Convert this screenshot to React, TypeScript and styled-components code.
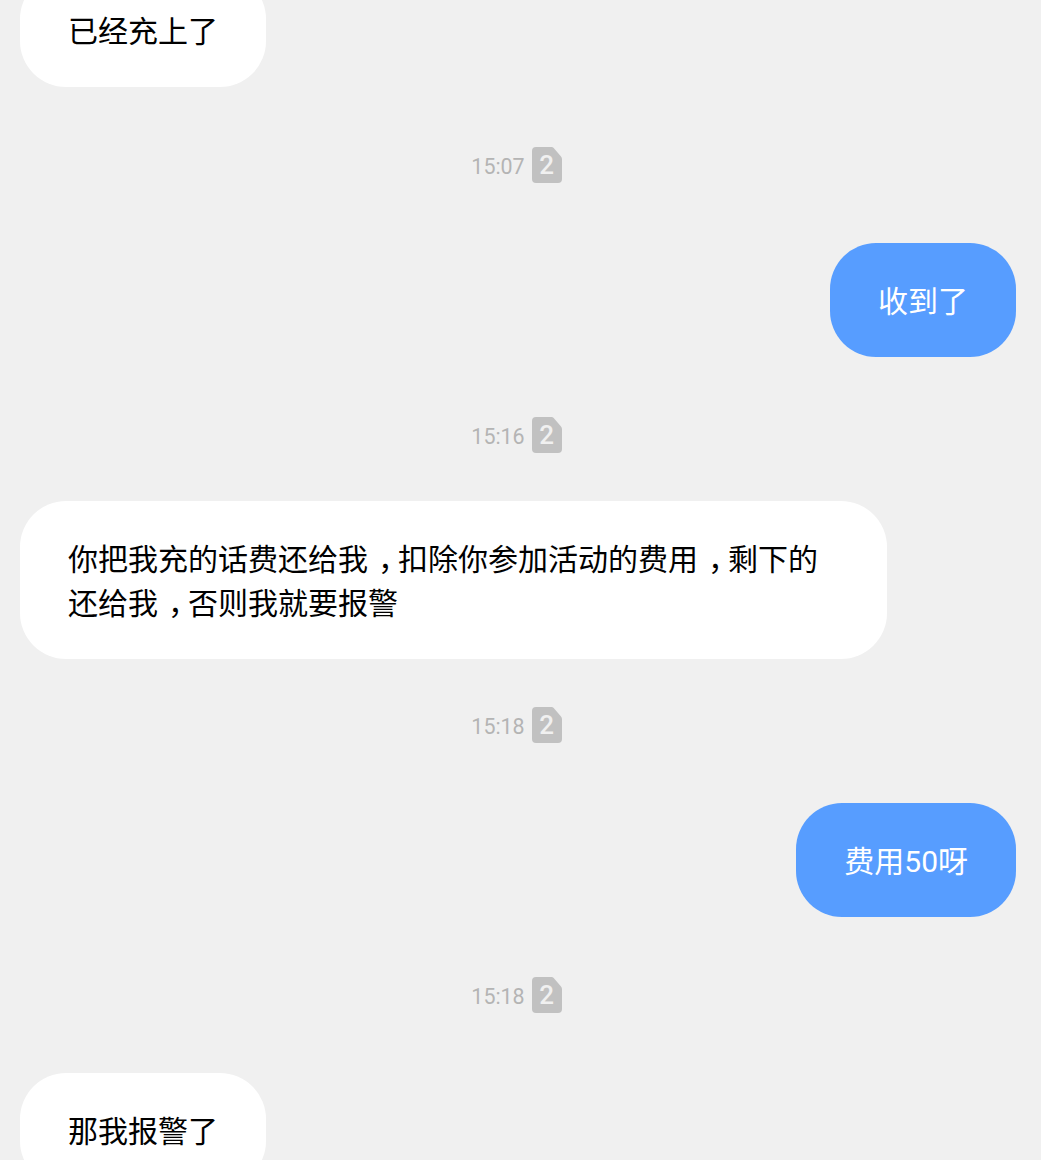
import { Fragment } from 'react';
import styled, { createGlobalStyle } from 'styled-components';

type Message =
  | { kind: 'time'; time: string; above: number; below: number }
  | { kind: 'bubble'; side: 'left' | 'right'; lines: string };

const messages: Message[] = [
  { kind: 'bubble', side: 'left', lines: '已经充上了' },
  { kind: 'time', time: '15:07', above: 60, below: 60 },
  { kind: 'bubble', side: 'right', lines: '收到了' },
  { kind: 'time', time: '15:16', above: 60, below: 48 },
  {
    kind: 'bubble',
    side: 'left',
    lines: '你把我充的话费还给我，扣除你参加活动的费用，剩下的还给我，否则我就要报警',
  },
  { kind: 'time', time: '15:18', above: 48, below: 60 },
  { kind: 'bubble', side: 'right', lines: '费用50呀' },
  { kind: 'time', time: '15:18', above: 60, below: 60 },
  { kind: 'bubble', side: 'left', lines: '那我报警了' },
];

// 逗号单独处理, 参考图里是居中的
function withCommas(text: string) {
  return text.split('，').map((part, i) => (
    <Fragment key={i}>
      {i > 0 && <Comma>，</Comma>}
      {part}
    </Fragment>
  ));
}

export default function App() {
  return (
    <>
      <GlobalStyle />
      <Page>
        <Thread>
          {messages.map((item, index) =>
            item.kind === 'time' ? (
              <TimeRow key={index} $above={item.above} $below={item.below}>
                <TimeText>{item.time}</TimeText>
                <Badge>
                  <BadgeShape viewBox="0 0 30 36">
                    <path d="M4 0H19.5a3 3 0 0 1 2.2 1L29 9.6a4 4 0 0 1 1 2.6V32a4 4 0 0 1-4 4H4a4 4 0 0 1-4-4V4a4 4 0 0 1 4-4Z" />
                  </BadgeShape>
                  <BadgeCount>2</BadgeCount>
                </Badge>
              </TimeRow>
            ) : (
              <Bubble key={index} $side={item.side}>
                {withCommas(item.lines)}
              </Bubble>
            ),
          )}
        </Thread>
      </Page>
    </>
  );
}

const GlobalStyle = createGlobalStyle`
  html, body {
    margin: 0;
    padding: 0;
    background: #f0f0f0;
  }
`;

const Page = styled.div`
  width: 1041px;
  height: 1160px;
  overflow: hidden;
  background: #f0f0f0;
  font-family: Roboto, 'Noto Sans CJK SC', sans-serif;
`;

const Thread = styled.div`
  display: flex;
  flex-direction: column;
  margin-top: -27px;
  padding: 0 25px 0 20px;
`;

const Bubble = styled.div<{ $side: 'left' | 'right' }>`
  box-sizing: border-box;
  width: fit-content;
  max-width: 867px;
  padding: 37px 48px 33px;
  border-radius: 46px;
  font-size: 30px;
  line-height: 44px;
  align-self: ${({ $side }) => ($side === 'left' ? 'flex-start' : 'flex-end')};
  background: ${({ $side }) => ($side === 'left' ? '#ffffff' : '#579dff')};
  color: ${({ $side }) => ($side === 'left' ? '#000000' : '#ffffff')};
`;

const Comma = styled.span`
  padding-left: 10px;
  letter-spacing: -10px;
`;

const TimeRow = styled.div<{ $above: number; $below: number }>`
  display: flex;
  align-items: center;
  justify-content: center;
  gap: 7px;
  height: 36px;
  margin: ${({ $above }) => $above}px 3px ${({ $below }) => $below}px 0;
`;

const TimeText = styled.span`
  padding-top: 2px;
  font-size: 21.4px;
  color: #b4b4b4;
`;

const Badge = styled.div`
  position: relative;
  width: 30px;
  height: 36px;
`;

const BadgeShape = styled.svg`
  display: block;
  width: 30px;
  height: 36px;
  fill: #c1c1c1;
`;

const BadgeCount = styled.span`
  position: absolute;
  inset: 0;
  display: flex;
  align-items: center;
  justify-content: center;
  font-size: 26px;
  font-weight: 500;
  color: #f0f0f0;
`;
